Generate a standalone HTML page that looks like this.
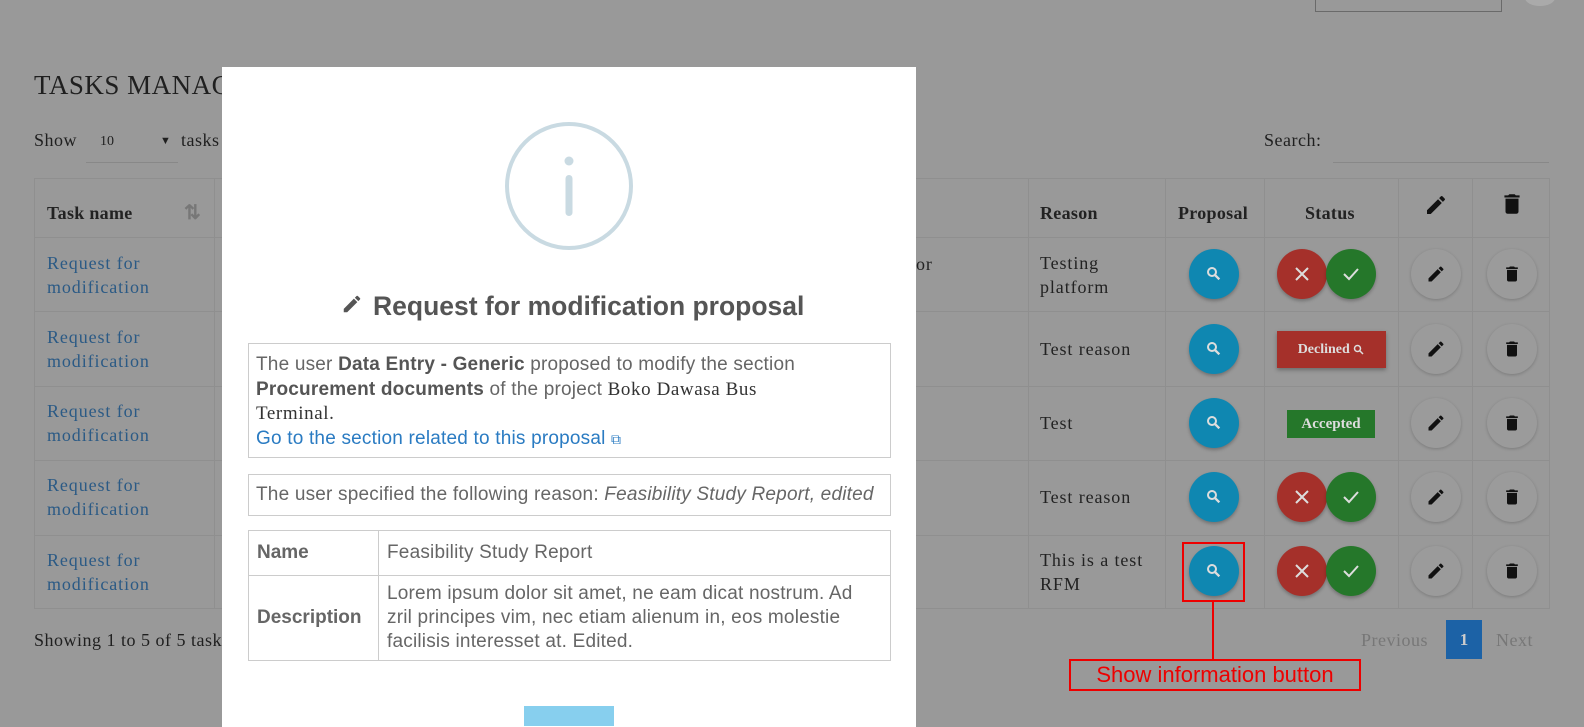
<!DOCTYPE html>
<html><head><meta charset="utf-8"><style>
*{box-sizing:border-box;margin:0;padding:0}
body{width:1584px;height:718px;overflow:hidden;background:#999;font-family:"Liberation Serif",serif;color:#1f1f1f;position:relative}
.a{position:absolute}
.s{font-family:"Liberation Sans",sans-serif}
.link{color:#2b5a85;font-size:18px;line-height:24px;letter-spacing:.9px}
.cell{font-size:18px;line-height:24px;color:#222;letter-spacing:.9px}
.hr{height:1px;background:#8f8f8f;left:34px;width:1516px}
.vr{width:1px;background:#8f8f8f;top:178px;height:431px}
.btn{width:50px;height:50px;border-radius:50%;display:flex;align-items:center;justify-content:center;box-shadow:0 2px 3px rgba(0,0,0,.25)}
.blue{background:#0f87b1}.red{background:#a5302a}.green{background:#25772a}.gray{background:#9b9b9b;box-shadow:0 1px 3px rgba(0,0,0,.2)}
.mt td{border:1px solid #ccc;padding:6px 8px;font-size:19px;color:#666;line-height:24px;letter-spacing:.2px}
</style></head><body>
<div class="a" style="left:1315px;top:-2px;width:187px;height:14px;border:1px solid #6a6a6a;border-top:none"></div>
<div class="a" style="left:1525px;top:-10px;width:30px;height:16px;border-radius:50%;background:#aaa"></div>
<div class="a" style="left:34px;top:70px;font-size:27px;color:#1f1f1f;letter-spacing:.5px">TASKS MANAGEMENT</div>
<div class="a" style="left:34px;top:130px;font-size:18px;letter-spacing:.5px">Show</div>
<div class="a" style="left:86px;top:134px;font-size:14px;width:92px;height:29px;border-bottom:1px solid #888;padding-left:14px">10<span style="position:absolute;left:74px;top:1px;font-size:11px">▼</span></div>
<div class="a" style="left:181px;top:130px;font-size:18px;letter-spacing:.5px">tasks</div>
<div class="a" style="left:1264px;top:130px;font-size:18px;letter-spacing:.5px">Search:</div>
<div class="a" style="left:1333px;top:162px;width:216px;height:1px;background:#888"></div>
<div class="a" style="left:34px;top:178px;width:1516px;height:431px;border:1px solid #8f8f8f"></div>
<div class="a hr" style="top:237px"></div><div class="a hr" style="top:311px"></div><div class="a hr" style="top:386px"></div><div class="a hr" style="top:460px"></div><div class="a hr" style="top:535px"></div>
<div class="a vr" style="left:214px"></div><div class="a vr" style="left:1028px"></div><div class="a vr" style="left:1165px"></div><div class="a vr" style="left:1264px"></div><div class="a vr" style="left:1398px"></div><div class="a vr" style="left:1472px"></div>
<div class="a cell" style="left:47px;top:201px;font-weight:bold;letter-spacing:.3px">Task name</div>
<div class="a" style="left:184px;top:200px;color:#777;font-size:20px;font-weight:bold">⇅</div>
<div class="a cell" style="left:1040px;top:201px;font-weight:bold;letter-spacing:.3px">Reason</div>
<div class="a cell" style="left:1178px;top:201px;font-weight:bold;letter-spacing:.3px">Proposal</div>
<div class="a cell" style="left:1305px;top:201px;font-weight:bold;letter-spacing:.3px">Status</div>
<svg class="a" style="left:1424px;top:193px" width="24" height="24" viewBox="0 0 24 24"><path fill="#111" d="M3 17.25V21h3.75L17.81 9.94l-3.75-3.75L3 17.25zM20.71 7.04a1 1 0 000-1.41l-2.34-2.34a1 1 0 00-1.41 0l-1.830 1.83 3.75 3.75 1.83-1.83z"/></svg>
<svg class="a" style="left:1499px;top:191px" width="26" height="26" viewBox="0 0 24 24"><path fill="#111" d="M6 19c0 1.1.9 2 2 2h8c1.1 0 2-.9 2-2V7H6v12zM19 4h-3.5l-1-1h-5l-1 1H5v2h14V4z"/></svg>
<div class="a link" style="left:47px;top:251px">Request for<br>modification</div>
<div class="a link" style="left:47px;top:325px">Request for<br>modification</div>
<div class="a link" style="left:47px;top:399px">Request for<br>modification</div>
<div class="a link" style="left:47px;top:473px">Request for<br>modification</div>
<div class="a link" style="left:47px;top:548px">Request for<br>modification</div>
<div class="a cell" style="left:916px;top:252px">or</div>
<div class="a cell" style="left:1040px;top:251px">Testing<br>platform</div>
<div class="a cell" style="left:1040px;top:337px">Test reason</div>
<div class="a cell" style="left:1040px;top:411px">Test</div>
<div class="a cell" style="left:1040px;top:485px">Test reason</div>
<div class="a cell" style="left:1040px;top:548px">This is a test<br>RFM</div>
<div id="btns"></div>
<div class="a" style="left:1277px;top:331px;width:109px;height:37px;background:#a5302a;color:#ddd;font-weight:bold;font-size:14px;display:flex;align-items:center;justify-content:center;box-shadow:0 2px 4px rgba(0,0,0,.3)">Declined&nbsp;<svg width="12" height="12" viewBox="0 0 24 24"><circle cx="9" cy="9" r="6" fill="none" stroke="#ddd" stroke-width="3"/><path d="M13 13l7 7" stroke="#ddd" stroke-width="3"/></svg></div>
<div class="a" style="left:1287px;top:410px;width:88px;height:28px;background:#25772a;color:#ddd;font-weight:bold;font-size:15px;display:flex;align-items:center;justify-content:center">Accepted</div>
<div class="a" style="left:34px;top:630px;font-size:18px;letter-spacing:.5px">Showing 1 to 5 of 5 tasks</div>
<div class="a" style="left:1361px;top:630px;font-size:18px;color:#777;letter-spacing:.5px">Previous</div>
<div class="a" style="left:1446px;top:620px;width:36px;height:39px;background:#1c62a6;color:#ccc;font-weight:bold;font-size:17px;text-align:center;line-height:39px">1</div>
<div class="a" style="left:1496px;top:630px;font-size:18px;color:#777;letter-spacing:.5px">Next</div>
<div class="a" style="left:1182px;top:542px;width:63px;height:60px;border:2px solid #e00"></div>
<div class="a" style="left:1212px;top:602px;width:2px;height:58px;background:#e00"></div>
<div class="a s" style="left:1069px;top:659px;width:292px;height:32px;border:2px solid #e00;color:#e00;font-size:22px;text-align:center;line-height:28px">Show information button</div>
<div class="a" style="left:222px;top:67px;width:694px;height:660px;background:#fff"></div>
<svg class="a" style="left:502px;top:119px" width="134" height="134"><circle cx="67" cy="67" r="62" fill="none" stroke="#c9dae2" stroke-width="4"/><circle cx="67" cy="42" r="4.5" fill="#c9dae2"/><rect x="63.5" y="56" width="7" height="41" rx="3.5" fill="#c9dae2"/></svg>
<svg class="a" style="left:341px;top:293px" width="22" height="22" viewBox="0 0 24 24"><path fill="#555" d="M3 17.25V21h3.75L17.81 9.94l-3.75-3.75L3 17.25zM20.71 7.04a1 1 0 000-1.41l-2.34-2.34a1 1 0 00-1.41 0l-1.83 1.83 3.75 3.75 1.83-1.83z"/></svg>
<div class="a s" style="left:373px;top:291px;font-size:26.5px;font-weight:bold;color:#555">Request for modification proposal</div>
<div class="a s" style="left:248px;top:343px;width:643px;height:115px;border:1px solid #ccc;padding:9px 7px;font-size:19px;line-height:24.5px;color:#666;letter-spacing:.2px;white-space:nowrap">The user <b style="color:#555">Data Entry - Generic</b> proposed to modify the section<br><b style="color:#555">Procurement documents</b> of the project <span style="font-family:'Liberation Serif',serif;color:#333;font-size:19px;letter-spacing:.6px">Boko Dawasa Bus<br>Terminal.</span><br><span style="color:#2a7bc2">Go to the section related to this proposal <span style="font-size:14px">⧉</span></span></div>
<div class="a s" style="left:248px;top:474px;width:643px;height:42px;border:1px solid #ccc;padding:8px 7px;font-size:19px;line-height:24px;color:#666;letter-spacing:.2px;white-space:nowrap">The user specified the following reason: <i>Feasibility Study Report, edited</i></div>
<table class="a s mt" style="left:248px;top:530px;width:643px;border-collapse:collapse">
<tr><td style="width:130px;height:45px;font-weight:bold;letter-spacing:0">Name</td><td>Feasibility Study Report</td></tr>
<tr><td style="font-weight:bold;letter-spacing:0">Description</td><td>Lorem ipsum dolor sit amet, ne eam dicat nostrum. Ad zril principes vim, nec etiam alienum in, eos molestie facilisis interesset at. Edited.</td></tr>
</table>
<div class="a" style="left:524px;top:706px;width:90px;height:20px;background:#87cfee"></div>
<script>
var h='',rows=[274,349,423,497,571];
rows.forEach(function(y,i){
h+='<div class="a btn blue" style="left:1189px;top:'+(y-25)+'px"><svg width="16" height="16" viewBox="0 0 24 24"><circle cx="9" cy="9" r="6" fill="none" stroke="#ddd" stroke-width="3"/><path d="M13 13l7 7" stroke="#ddd" stroke-width="3.5"/></svg></div>';
if(i!=1&&i!=2){h+='<div class="a btn red" style="left:1277px;top:'+(y-25)+'px"><svg width="16" height="16"><path d="M2 2l12 12M14 2L2 14" stroke="#ddd" stroke-width="2"/></svg></div><div class="a btn green" style="left:1326px;top:'+(y-25)+'px"><svg width="18" height="16"><path d="M2 8l5 5L16 3" fill="none" stroke="#ddd" stroke-width="2"/></svg></div>';}
h+='<div class="a btn gray" style="left:1411px;top:'+(y-25)+'px"><svg width="20" height="20" viewBox="0 0 24 24"><path fill="#111" d="M3 17.25V21h3.75L17.81 9.94l-3.75-3.75L3 17.25zM20.71 7.04a1 1 0 000-1.41l-2.34-2.34a1 1 0 00-1.41 0l-1.83 1.83 3.75 3.75 1.83-1.83z"/></svg></div>';
h+='<div class="a btn gray" style="left:1487px;top:'+(y-25)+'px"><svg width="20" height="20" viewBox="0 0 24 24"><path fill="#111" d="M6 19c0 1.1.9 2 2 2h8c1.1 0 2-.9 2-2V7H6v12zM19 4h-3.5l-1-1h-5l-1 1H5v2h14V4z"/></svg></div>';
});
document.getElementById('btns').innerHTML=h;
</script>
</body></html>
